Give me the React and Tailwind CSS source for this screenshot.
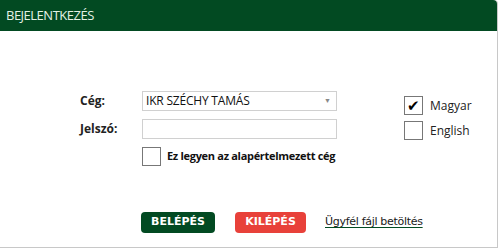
import React, { useState } from 'react';

export default function App() {
  const [lang, setLang] = useState('hu');
  const [def, setDef] = useState(false);

  return (
    <div className="w-[499px] h-[250px] bg-white" style={{ fontFamily: '"Open Sans", "Noto Sans", sans-serif' }}>
      <div className="w-[498px] h-[248px] bg-white border-r border-b border-[#c8c8c8] rounded-tr-[4px] flex flex-col">
        {/* fejléc */}
        <div className="h-[31px] bg-[#024a22] rounded-tr-[4px] flex items-center pl-[6px] text-[13px] text-[#e4f2e6] tracking-[-0.5px]">
          BEJELENTKEZÉS
        </div>

        <div className="flex pt-[60px] pl-[80px]">
          {/* űrlap */}
          <div className="flex flex-col">
            <div className="flex items-center h-[20px]">
              <span className="w-[62px] text-[12px] font-bold text-[#222]">Cég:</span>
              <div className="w-[195px] h-[20px] border border-[#d0d0d0] flex items-center justify-between pl-[3px] pr-[5px]">
                <span className="text-[12px] text-[#111] tracking-[-0.2px]">IKR SZÉCHY TAMÁS</span>
                <span className="text-[7px] text-[#888]">▼</span>
              </div>
            </div>
            <div className="flex items-center h-[20px] mt-[8px]">
              <span className="w-[62px] text-[12px] font-bold text-[#222]">Jelszó:</span>
              <input type="password" className="w-[195px] h-[20px] border border-[#d0d0d0] outline-none text-[11px] px-[3px]" />
            </div>
            <div className="flex items-center mt-[8px] ml-[62px]">
              <button
                onClick={() => setDef(!def)}
                className="w-[19px] h-[19px] border border-[#777] bg-white flex items-center justify-center text-[13px]"
              >
                {def ? '✔' : ''}
              </button>
              <span className="ml-[6px] text-[11px] font-bold text-[#111] tracking-[-0.3px]">Ez legyen az alapértelmezett cég</span>
            </div>
          </div>

          {/* nyelv */}
          <div className="flex flex-col ml-[67px] mt-[5px] gap-[6px]">
            <label className="flex items-center cursor-pointer" onClick={() => setLang('hu')}>
              <span className="w-[19px] h-[19px] border border-[#777] flex items-center justify-center text-[15px] leading-none text-black">
                {lang === 'hu' ? '✔' : ''}
              </span>
              <span className="ml-[7px] text-[12px] text-[#222]">Magyar</span>
            </label>
            <label className="flex items-center cursor-pointer" onClick={() => setLang('en')}>
              <span className="w-[19px] h-[19px] border border-[#777] flex items-center justify-center text-[15px] leading-none text-black">
                {lang === 'en' ? '✔' : ''}
              </span>
              <span className="ml-[7px] text-[12px] text-[#222]">English</span>
            </label>
          </div>
        </div>

        {/* gombok */}
        <div className="flex items-center mt-auto mb-[14px] ml-[141px]">
          <button
            className="w-[74px] h-[21px] rounded-[4px] bg-[#024a22] text-white text-[11px] font-bold"
            style={{ fontFamily: '"DejaVu Sans", Verdana, sans-serif' }}
          >
            BELÉPÉS
          </button>
          <button
            className="ml-[20px] w-[71px] h-[21px] rounded-[4px] bg-[#e8413a] text-white text-[11px] font-bold"
            style={{ fontFamily: '"DejaVu Sans", Verdana, sans-serif' }}
          >
            KILÉPÉS
          </button>
          <a
            href="#"
            className="ml-[19px] text-[11px] text-[#1a1a1a] underline underline-offset-2 decoration-[#024a22] tracking-[-0.3px]"
            style={{ fontFamily: '"DejaVu Sans", Verdana, sans-serif' }}
          >
            Ügyfél fájl betöltés
          </a>
        </div>
      </div>
    </div>
  );
}
